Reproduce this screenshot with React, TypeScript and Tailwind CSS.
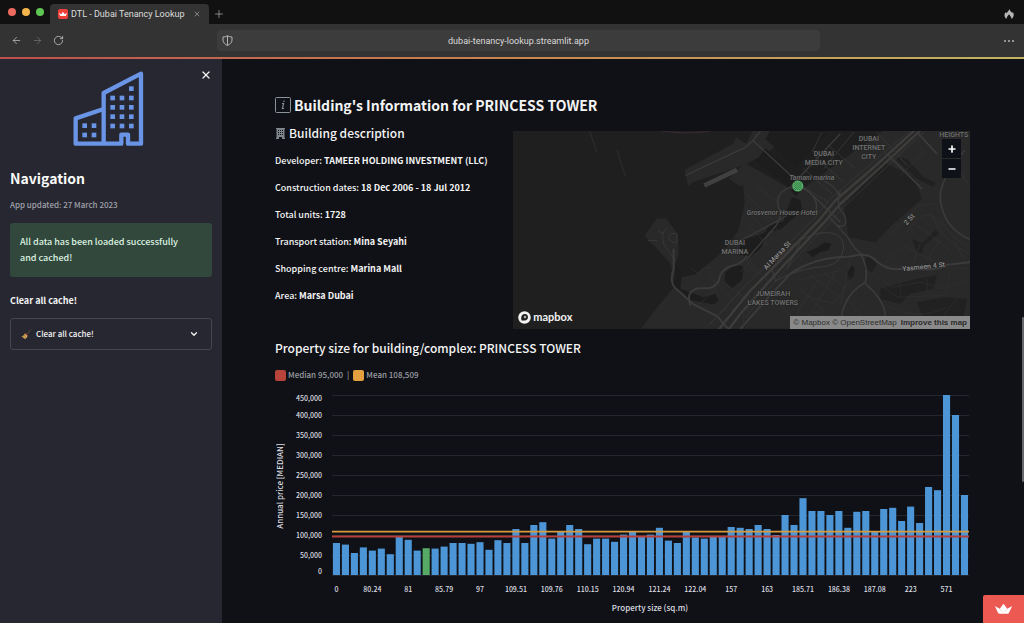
import React, { useState } from 'react';
import { ArrowLeft, ArrowRight, ChevronDown, Minus, Plus, RotateCw, X } from 'lucide-react';

interface Detail {
  label: string;
  value: string;
}

const details: Detail[] = [
  { label: 'Developer', value: 'TAMEER HOLDING INVESTMENT (LLC)' },
  { label: 'Construction dates', value: '18 Dec 2006 - 18 Jul 2012' },
  { label: 'Total units', value: '1728' },
  { label: 'Transport station', value: 'Mina Seyahi' },
  { label: 'Shopping centre', value: 'Marina Mall' },
  { label: 'Area', value: 'Marsa Dubai' },
];

// Median annual price per property size, in thousands
const prices = [
  80, 76, 55, 69, 61, 66, 52, 95, 88, 61, 67, 66, 71, 80, 80, 78, 82, 63, 87, 80, 115, 80, 125, 132, 91, 108, 125, 115,
  77, 91, 91, 83, 101, 108, 95, 101, 118, 86, 80, 108, 94, 91, 95, 95, 120, 118, 115, 125, 115, 100, 150, 125, 192,
  160, 160, 150, 160, 118, 158, 160, 109, 165, 168, 135, 171, 130, 220, 212, 450, 400, 200,
];
const selectedIndex = 10;
const median = 95;
const mean = 108.509;

const sizes = [
  '0', '80.24', '81', '85.79', '97', '109.51', '109.76', '110.15', '120.94', '121.24', '122.04', '157', '163',
  '185.71', '186.38', '187.08', '223', '571',
];

const plot = { left: 57, right: 694, bottom: 187, unit: 0.4 };
const step = (plot.right - plot.left) / prices.length;
const yOf = (value: number) => plot.bottom - value * plot.unit;

function Crown({ className }: { className?: string }) {
  return (
    <svg className={className} viewBox="0 0 34 20" fill="currentColor" aria-hidden="true">
      <path d="M.5 4.500l9 5 6.300-8.600c.6-.8 1.800-.8 2.400 0L24.500 9.500l9-5c.4-.2.6.1.4.5L28 17.500c-.6 1.200-1.400 1.800-2.800 1.800H8.800c-1.400 0-2.200-.6-2.800-1.800L.1 5c-.2-.4 0-.7.4-.5z" />
      <path d="M9.500 9.500l6 7M24.500 9.500l-6 7" stroke="#ff5b5b" strokeOpacity="0.4" strokeWidth="1.2" />
    </svg>
  );
}

function BrowserBar() {
  return (
    <header>
      <div className="flex h-6 items-end bg-[#111111] text-[#a8a8a8]">
        <div className="flex h-6 w-[50px] items-center gap-1.5 pl-2">
          <span className="size-2 rounded-full bg-[#ec6a5e]" />
          <span className="size-2 rounded-full bg-[#f4b54c]" />
          <span className="size-2 rounded-full bg-[#5fc553]" />
        </div>
        <div className="flex h-5 w-[159px] items-center rounded-t bg-[#333333] pl-2 pr-2">
          <span className="flex size-2.5 items-center justify-center rounded-xs bg-[#ee3f3a] text-white">
            <Crown className="w-2" />
          </span>
          <span className="ml-[3px] flex-1 whitespace-nowrap font-['Roboto',sans-serif] text-[9px] leading-3 text-[#dedede]">
            DTL - Dubai Tenancy Lookup
          </span>
          <button type="button" aria-label="Close tab">
            <X className="size-2" />
          </button>
        </div>
        <button type="button" aria-label="New tab" className="mb-1 ml-1">
          <Plus className="size-3" strokeWidth={1.5} />
        </button>
        <svg className="mb-1 ml-auto mr-2.5 h-3 w-2.5" viewBox="0 0 10 12" fill="#b5b5b5" aria-hidden="true">
          <path d="M5.200.8c.3 2 2 2.700 3 4.300.6-.5.6-1 .6-1.400C10.500 6.500 9.800 9.700 7.300 11 7.700 8.800 6 8 5 6.300 4 8 2.300 8.800 2.700 11 .2 9.500-.2 6.700 1.500 4.300 2 4.800 2.300 5 2.300 5.300 3.500 4 5 3 5.200.8z" />
        </svg>
      </div>
      <div className="flex h-[33px] items-center bg-[#333333] text-[#b4b4b4]">
        <div className="flex w-[217px] items-center gap-2.5 pl-[11px]">
          <button type="button" aria-label="Back">
            <ArrowLeft className="size-[11px]" strokeWidth={1.8} />
          </button>
          <button type="button" aria-label="Forward" className="text-[#6c6c6c]">
            <ArrowRight className="size-[11px]" strokeWidth={1.8} />
          </button>
          <button type="button" aria-label="Reload">
            <RotateCw className="size-[11px]" strokeWidth={2} />
          </button>
        </div>
        <div className="flex h-[21px] flex-1 items-center rounded bg-[#3c3c3c] pl-[5px]">
          <svg className="size-[11px]" viewBox="0 0 22 22" fill="none" stroke="currentColor" strokeWidth="2" aria-hidden="true">
            <path d="M11 1.500c3 1.800 6 2.500 9 2.500v6c0 5-4 9-9 11-5-2-9-6-9-11V4c3 0 6-.7 9-2.500zM11 2v18" />
          </svg>
          <input
            aria-label="Address"
            readOnly
            value="dubai-tenancy-lookup.streamlit.app"
            className="min-w-0 flex-1 bg-transparent pr-4 text-center font-['Roboto',sans-serif] text-[9px] leading-4 text-[#dadada] outline-none"
          />
        </div>
        <div className="flex w-[204px] justify-end pr-2.5">
          <button type="button" aria-label="More" className="flex gap-px">
            <span className="size-0.5 rounded-full bg-current" />
            <span className="mx-px size-0.5 rounded-full bg-current" />
            <span className="size-0.5 rounded-full bg-current" />
          </button>
        </div>
      </div>
      <div className="h-0.5 bg-linear-to-r from-[#bf4f4c] via-[#c98550] to-[#c2b562]" />
    </header>
  );
}

const logoWindows = [
  [28, 157], [56, 157], [28, 185], [56, 185],
  [168, 46],
  [112, 74], [140, 74], [168, 74],
  [112, 102], [140, 102], [168, 102],
  [112, 130], [140, 130], [168, 130],
  [112, 158], [140, 158], [168, 158],
];

function BuildingLogo() {
  return (
    <svg className="mx-auto h-[76px] w-[77px]" viewBox="0 0 231 228" fill="none" stroke="#6a94e6" strokeWidth="13" strokeLinejoin="round" aria-hidden="true">
      <path d="M92 218V66L204 8v210h-39v-27h-20v27H8v-76l84-28" />
      <g fill="#6a94e6" stroke="none">
        {logoWindows.map(([x, y]) => (
          <rect key={`${x}-${y}`} x={x} y={y} width="14" height="14" />
        ))}
      </g>
    </svg>
  );
}

function Sidebar() {
  const [open, setOpen] = useState(false);

  return (
    <aside className="relative w-[222px] shrink-0 bg-[#262730] px-2.5 pt-3 font-medium">
      <button type="button" aria-label="Close sidebar" className="absolute right-2.5 top-2.5 text-[#f4f4f4]">
        <X className="size-3" strokeWidth={2.5} />
      </button>
      <BuildingLogo />
      <h2 className="mt-[21px] text-[14px] font-semibold leading-5 text-[#fafafa]">Navigation</h2>
      <p className="mt-[9px] text-[8px] leading-4 text-[#a0a1ab]">App updated: 27 March 2023</p>
      <div className="mt-2.5 rounded-[3px] bg-[#32483d] py-[11px] pl-2.5 pr-5 text-[9px] leading-4 text-[#dcf3e0]">
        All data has been loaded successfully and cached!
      </div>
      <h3 className="mt-4 text-[9px] font-bold leading-4 text-[#f4f4f4]">Clear all cache!</h3>
      <button
        type="button"
        aria-expanded={open}
        onClick={() => setOpen(!open)}
        className="mt-[9px] flex h-8 w-full items-center rounded-[3px] border border-[#44454d] px-2.5 text-[8px] leading-4 text-[#f4f4f4]"
      >
        <svg className="size-[11px]" viewBox="0 0 22 22" aria-hidden="true">
          <path d="M11 11L20 1" stroke="#6b4531" strokeWidth="1.8" />
          <path d="M8 9l5 4c0 4-3 6-5 7l-7-5c3-1 5-3 7-6z" fill="#d9a95b" />
          <path d="M8 9l5 4" stroke="#b5503c" strokeWidth="2" />
          <path d="M4 16l4-4M7 18l3-5" stroke="#8d6429" />
        </svg>
        <span className="ml-1 flex-1 text-left">Clear all cache!</span>
        <ChevronDown className="mr-0.5 size-2.5" strokeWidth={3} />
      </button>
    </aside>
  );
}

function MapDrawing() {
  return (
    <svg className="absolute inset-0 size-full" viewBox="0 0 457 198" preserveAspectRatio="xMidYMid slice" aria-hidden="true">
      <rect width="457" height="198" fill="#1f1f1f" />
      <g transform="translate(-2.5 -5.5) scale(.33333)" fill="none" stroke="#3b3b3b" strokeWidth="4" strokeLinejoin="round">
        {/* Land */}
        <g fill="#292929" stroke="none">
          <path d="M390 612L445 540l70-85 40-8 90-75 40-60 18-80-5-60-25-25 30-35 160 90 50-40 210-149h412v597H390z" />
          <path d="M523 133l145-78 10-20 30 20 20-40h85l-15 45-30 25-70 35-150 50-15 12z" />
          <path d="M402 330l38-50 28-2 35 50 2 60-10 25 30 60-30 15-15-75z" />
          <path d="M655 160l40-40 40 10-5 55-45-5z" />
        </g>
        {/* Water */}
        <g fill="#1d1d1d" stroke="none">
          <path d="M780 15h180l-60 62-45 48-90-85z" />
          <path d="M765 68l70 60 40 65-18 20-45-50-75-55z" />
          <path d="M495 415l20 25-5 50 70 25 35-10 10 20-15 12-75-15-45-35z" />
          <path d="M645 440l30-22 25 5-5 40-30 25-22-20z" />
          <path d="M845 215l25 8 5 30-20 20-45 40-35 5-25 55-40 25-30-15 20-40 60-20 20-25 40-10 5-25z" />
          <path d="M888 380l35-15 20-15 20 5-10 20-25 5-20 15z" />
          <path d="M1010 435l18-15 5 15-10 30-12-10z" />
        </g>
        <g fill="#212121" stroke="none">
          <path d="M1000 240l120-130 90 45 25 65-85 75-55 55-80-15z" />
          <path d="M1205 340l30 15 40-40 10 10-45 35-5 25-15-5z" />
          <path d="M1070 390l30 25-15 25-25-10zM1110 490l110-30 60-10-10 40-70 15-30 30-60-15z" />
          <path d="M1220 530l80-15 70 5-10 55-120 10zM1160 95l30 5 50 55 35 15-5 15-50-25-60-55z" />
        </g>
        {/* Breakwaters */}
        <path d="M238 17l22 64M320 74l26 80" stroke="#2b2b2b" />
        <path d="M455 17q70 10 145 0" stroke="#34292f" />
        <path d="M582 180l98-47" stroke="#404040" strokeWidth="14" />
        <path d="M525 150L700 68" stroke="#3b3b3b" />
        {/* Palm road and marina */}
        <path d="M495 405l-35-50q-10-35 12-47M440 345h-27M460 325l-17-8M500 325q-20-5-25 10 5 20 25 15z" strokeWidth="2.5" />
        <path d="M490 370v60q-15 45 10 62l50 45 70 35 35 40M540 540q-15-45 25-52h30q30-5 35-40 15-25 40-28 25-5 40-30" strokeWidth="6" />
        <path d="M545 430l20 15 10-15 25-5M595 450l80 80M620 490l-70 60M640 470l80 60M655 540l-80 75M690 380l50 65M710 250l60 70M640 365l75 75" stroke="#343434" strokeWidth="2" />
        {/* Sheikh Zayed corridor */}
        <path d="M1212 15L1085 130 975 225 930 280 805 410 720 495 625 612" stroke="#3e3d3b" strokeWidth="7" />
        <path d="M1230 15L1100 135 990 235 942 290 815 425 690 565 655 612" stroke="#3e3d3b" strokeWidth="7" />
        <path d="M1200 15L1070 125 960 220 915 275 790 400 705 480 600 595M1240 20L1112 140 1000 245 950 300 822 435 705 575" strokeWidth="2" />
        <g transform="translate(690)">
          <path d="M10 70l28-25 22-28M38 45l190 175 72 70M20 400l75-85q25-25 25-55-25-55 30-75l60-65 90-95M0 345l30-15 110-60M220 270q25-40-20-75-25-15-50-5" />
          <path d="M165 170l100 60M190 130l85 75M225 95l85 75M265 60l80 70M215 80l30-60M395 40l45 45M410 20l90 100M250 130l90-110" stroke="#353535" strokeWidth="3" />
          <path d="M262 270l60 65q25 45 45 52M300 195q-15 50 10 70 20 45-20 35M248 165q45 20 50 55" />
          <path d="M95 430q60-95 150-108 65-5 65 45-5 45-50 55-85 5-155 45zM180 350l-40 80" strokeWidth="3" />
          <path d="M0 610l80-90 70-75q70-50 180-52 55-15 80 15 40 35 90 18 80 15 120-8l85-10" strokeWidth="6" />
          <path d="M360 385q25 40 15 85-75 45-73 130M375 475q55 45 60 95M440 85l105 105M530 20l60 65M672 75q-85 100-70 160 15 80 95 110" strokeWidth="5" />
          <path d="M445 330l90-90 45-5M500 320q60-95 105-15M430 415l60-55 95 50 40-40-95-70M600 280q40 75 95 80M570 260q30 85 125 130M540 355l-20 55M600 340l-40 65M645 350l25 50" stroke="#333" strokeWidth="2" />
          <path d="M430 420l260 10M395 440l60 45 85-15 70 20 85-30M430 485l40 30 150-5M440 540q90 50 180 5M480 470v40M560 460v50M630 430l-15 80M650 520l-40 50" stroke="#303030" strokeWidth="2" />
          <path d="M170 465l130-30 35 25-55 75-85-25-25 55M210 450l80 60M250 440l70 50M180 490l85 80M230 470l-50 80M285 440l-70 120M330 400l-30 140M320 520l50 60M200 575q30-35 55 5M80 500l90 90M10 545v65M50 500l-30 60" stroke="#343434" strokeWidth="2" />
          <path d="M20 290l60 70M60 260l80 80M0 440l80-90M30 410l60 65M50 180l60 50M20 210l80 75M450 110l70-70M480 150l70-70M600 60l60-50M650 130l45 60M620 80l60 90" stroke="#333" strokeWidth="2" />
        </g>
      </g>
      <g className="font-['Roboto',sans-serif] text-[7px]" fill="#727272" stroke="#222" strokeWidth="1" paintOrder="stroke" textAnchor="middle">
        <text x="356" y="10">DUBAI</text>
        <text x="356" y="19">INTERNET</text>
        <text x="356" y="28">CITY</text>
        <text x="311" y="25">DUBAI</text>
        <text x="311" y="34">MEDIA CITY</text>
        <text x="441" y="6">HEIGHTS</text>
        <text x="222" y="114">DUBAI</text>
        <text x="222" y="123">MARINA</text>
        <text x="260" y="165">JUMEIRAH</text>
        <text x="260" y="174">LAKES TOWERS</text>
        <text x="299" y="49" className="italic">Tamani marina</text>
        <text x="269" y="84" className="italic">Grosvenor House Hotel</text>
        <text x="266" y="126" fill="#919191" transform="rotate(-47 266 126)">Al Marsa St</text>
        <text x="398" y="90" fill="#919191" transform="rotate(-47 398 90)">2 St</text>
        <text x="411" y="138" fill="#919191" transform="rotate(-6 411 138)">Yasmeen 4 St</text>
      </g>
      <circle cx="285" cy="55" r="5.5" fill="#56b169" />
      <g fill="#38804b">
        {[281, 283, 285, 287].map((x) =>
          [51, 53, 55, 57].map((y) => <path key={`${x}-${y}`} d={`M${x} ${y}h1v1h-1zM${x + 1} ${y + 1}h1v1h-1z`} />)
        )}
      </g>
    </svg>
  );
}

function BuildingMap() {
  return (
    <div className="relative mt-1.5 h-[198px] overflow-hidden bg-[#1f1f1f]">
      <MapDrawing />
      <div className="absolute right-[9px] top-2 flex flex-col gap-px text-white">
        <button type="button" aria-label="Zoom in" className="flex h-[19px] w-[19px] items-center justify-center bg-[#0e1117]">
          <Plus className="size-2.5" strokeWidth={4} />
        </button>
        <button type="button" aria-label="Zoom out" className="flex h-[19px] w-[19px] items-center justify-center bg-[#0e1117]">
          <Minus className="size-2.5" strokeWidth={4} />
        </button>
      </div>
      <a href="#mapbox" className="absolute bottom-1 left-[5px] flex items-center gap-0.5 text-[#f2f2f2]">
        <svg className="size-[13px]" viewBox="0 0 26 26" aria-hidden="true">
          <circle cx="13" cy="13" r="12.5" fill="currentColor" />
          <path d="M7 19c-2-8 1-13 7-13 4 0 6 3 6 6 0 6-5 8-13 7z" fill="#1f1f1f" />
          <path d="M14 8.500l1 2.500 2.500 1-2.500 1-1 2.500-1-2.500-2.500-1 2.500-1z" fill="currentColor" />
        </svg>
        <span className="font-['Lato',sans-serif] text-[11px] font-bold leading-4">mapbox</span>
      </a>
      <div className="absolute bottom-0 right-0 flex gap-1 bg-[#8a8a8a] px-[3px] font-['Liberation_Sans',sans-serif] text-[8px] leading-[13px] text-[#2b2b2b]">
        <span>
          <a href="#mapbox">© Mapbox</a> <a href="#osm">© OpenStreetMap</a>
        </span>
        <a href="#improve" className="font-bold">
          Improve this map
        </a>
      </div>
    </div>
  );
}

function PriceChart() {
  return (
    <svg className="mt-[5px] w-full text-[7px]" viewBox="0 0 695 230" fill="#dddee1" role="img" aria-label="Median annual price by property size">
      {Array.from({ length: 10 }, (_, i) => i * 50).map((value) => (
        <g key={value}>
          <path d={`M${plot.left} ${yOf(value) + 0.5}H${plot.right}`} stroke="#232830" />
          <text x="47" y={yOf(value) + (value === 0 ? -1 : value === 450 ? 6 : 3)} textAnchor="end">
            {value === 0 ? '0' : `${value},000`}
          </text>
        </g>
      ))}
      {prices.map((price, i) => (
        <rect
          key={i}
          x={plot.left + 0.9 + i * step}
          y={yOf(price)}
          width="7.1"
          height={price * plot.unit}
          fill={i === selectedIndex ? '#55ab66' : '#4c96d7'}
        />
      ))}
      <path d={`M${plot.left} ${yOf(median) - 0.5}H${plot.right}`} stroke="#b8403a" strokeWidth="2" />
      <path d={`M${plot.left} ${yOf(mean)}H${plot.right}`} stroke="#d79a3e" strokeWidth="1.6" />
      {sizes.map((size, i) => (
        <text key={size} x={plot.left + step * (i * 4 + 0.5)} y="204" textAnchor="middle">
          {size}
        </text>
      ))}
      <text x="375" y="223" textAnchor="middle" className="text-[8px]">
        Property size (sq.m)
      </text>
      <text x="8" y="98" textAnchor="middle" transform="rotate(-90 8 98)" className="text-[8px]">
        Annual price [MEDIAN]
      </text>
    </svg>
  );
}

export default function App() {
  return (
    <div className="flex min-h-screen flex-col bg-[#0f1116] font-['Noto_Sans_CJK_SC',sans-serif] text-[#f4f4f4]">
      <BrowserBar />
      <div className="flex flex-1">
        <Sidebar />

        <main className="relative min-w-0 flex-1 pl-[53px] pr-[54px] pt-[34px] font-medium">
          <h1 className="flex items-center gap-[3px] text-[14px] font-semibold leading-6">
            <svg className="size-4" viewBox="0 0 16 16" fill="none" stroke="#8b9298" aria-hidden="true">
              <rect x="0.5" y="0.5" width="15" height="15" rx="1" />
              <path d="M7 6.500h1.600L7.400 11.500h1.600" strokeWidth="1.1" />
              <circle cx="8.9" cy="4.300" r="0.8" fill="#8b9298" stroke="none" />
            </svg>
            Building's Information for PRINCESS TOWER
          </h1>

          <div className="mt-2 grid grid-cols-[1fr_2fr] gap-2.5">
            <div>
              <h2 className="flex items-center gap-[3px] text-[12px] font-medium leading-4">
                <svg className="size-[11px]" viewBox="0 0 11 11" fill="#7f868c" aria-hidden="true">
                  <path d="M1 0h9v1h-.5v9h.5v1H7V9H4v2H1v-1h.5V1H1z" />
                  <path d="M3 2h1v1H3zM5 2h1v1H5zM7 2h1v1H7zM3 4h1v1H3zM5 4h1v1H5zM7 4h1v1H7zM3 6h1v1H3zM5 6h1v1H5zM7 6h1v1H7z" fill="#0f1116" />
                </svg>
                Building description
              </h2>
              <div className="mt-3 flex flex-col gap-[11px] whitespace-nowrap text-[9px] leading-4">
                {details.map((detail) => (
                  <p key={detail.label}>
                    {detail.label}: <strong>{detail.value}</strong>
                  </p>
                ))}
              </div>
            </div>
            <BuildingMap />
          </div>

          <h2 className="mt-[9px] text-[12px] font-medium leading-5">Property size for building/complex: PRINCESS TOWER</h2>
          <div className="mt-[9px] flex items-center gap-0.5 text-[8px] leading-4 text-[#9b9da3]">
            <span className="size-[11px] rounded-xs bg-[#b8433b]" />
            <span>Median 95,000</span>
            <span className="px-0.5">|</span>
            <span className="size-[11px] rounded-xs bg-[#e5a03f]" />
            <span>Mean 108,509</span>
          </div>
          <PriceChart />

          {/* Scroll thumb */}
          <div className="absolute right-0 top-[258px] h-[165px] w-0.5 rounded-full bg-[#65676b]" />
        </main>
      </div>

      <a href="#streamlit" aria-label="Hosted with Streamlit" className="fixed bottom-0 right-0 flex h-7 w-[41px] items-center justify-center rounded-tl-xs bg-[#ec5953] text-white">
        <Crown className="w-[17px]" />
      </a>
    </div>
  );
}
